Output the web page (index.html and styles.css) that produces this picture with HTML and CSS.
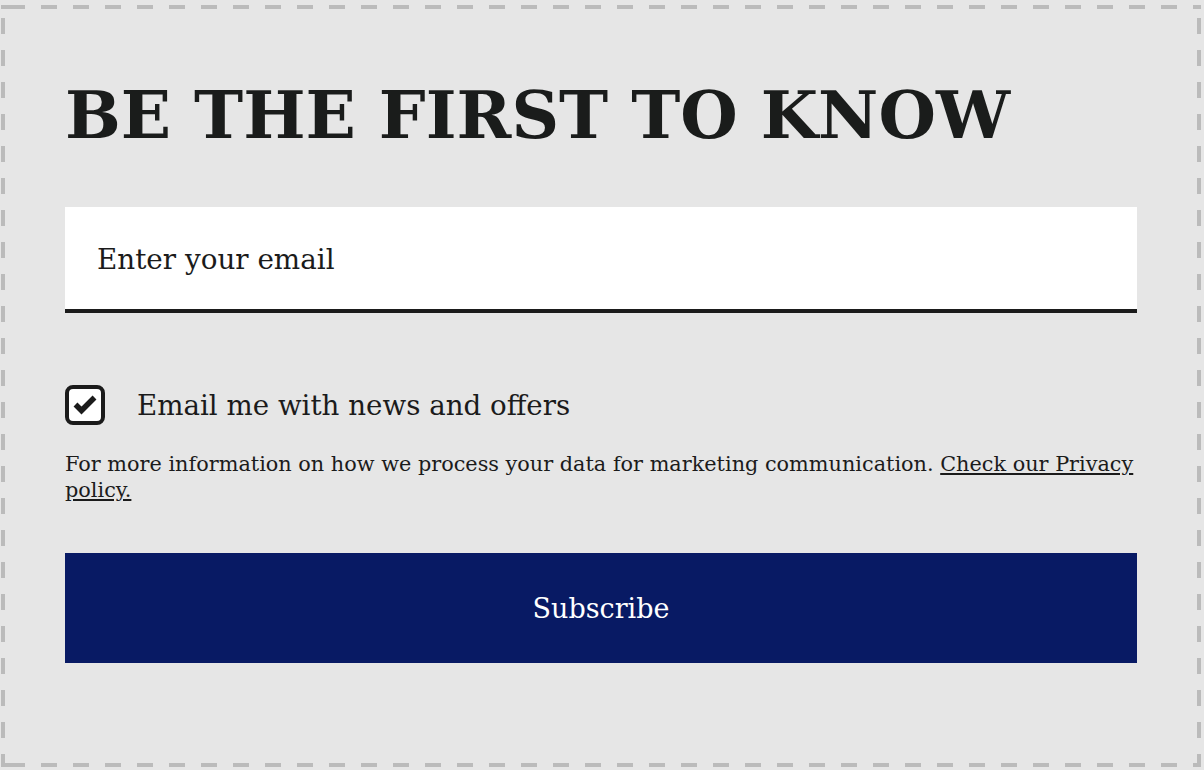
FILE: index.html
```html
<!DOCTYPE html>
<html>
<head>
  <meta charset="utf-8">
  <link rel="stylesheet" href="styles.css">
</head>
<body>
	<div class="signup">
		<h1 class="signup-title">BE THE FIRST TO KNOW</h1>
		<form class="signup-form" onsubmit="return false">
			<input class="email-field" type="email" placeholder="Enter your email">
			<label class="consent">
				<input class="consent-input" type="checkbox" checked>
				<span class="consent-box">
					<svg width="40" height="40" viewBox="0 0 40 40">
						<rect x="2" y="2" width="36" height="36" rx="6" fill="#fff" stroke="#1b1b1b" stroke-width="4"/>
						<path d="M10.5 19.5 L16.5 25.5 L29.5 12.5" fill="none" stroke="#1b1b1b" stroke-width="5.5" stroke-linejoin="miter"/>
					</svg>
				</span>
				<span class="consent-text">Email me with news and offers</span>
			</label>
			<p class="privacy">For more information on how we process your data for marketing communication. <a href="#">Check our Privacy policy.</a></p>
			<button class="subscribe" type="submit">Subscribe</button>
		</form>
	</div>
</body>
</html>
```

FILE: styles.css
```css
/* ============================================================
  PAGE
============================================================ */
html, body {
  margin: 0;
  background-color: #e6e6e6;
}
body {
  font-family: "DejaVu Serif", Georgia, serif;
  color: #1b1b1b;
}

/* dashed frame, drawn with gradients so the dash rhythm is exact */
.signup {
  box-sizing: border-box;
  width: 1200px;
  margin: 5px 0 0 1px;
  padding: 77px 64px 104px;
  background-color: #e6e6e6;
  background-image:
    repeating-linear-gradient(90deg, #bbbbbb 0 16px, transparent 16px 32px),
    repeating-linear-gradient(90deg, #bbbbbb 0 16px, transparent 16px 32px),
    repeating-linear-gradient(180deg, #bbbbbb 0 16px, transparent 16px 32px),
    repeating-linear-gradient(180deg, #bbbbbb 0 16px, transparent 16px 32px);
  background-size: 100% 4px, 100% 4px, 4px 100%, 4px 100%;
  background-position: 8px 0, 8px 100%, 0 13px, 100% 13px;
  background-repeat: repeat-x, repeat-x, repeat-y, repeat-y;
}

/* ============================================================
  TITLE
============================================================ */
.signup-title {
  margin: 0 0 59px;
  font-size: 66px;
  line-height: 66px;
  font-weight: bold;
  color: #1a1c1b;
}

/* ============================================================
  FORM
============================================================ */
.signup-form {
  display: flex;
  flex-direction: column;
}
.email-field {
  box-sizing: border-box;
  height: 106px;
  margin: 0;
  padding: 2px 32px 0;
  border: none;
  border-bottom: 4px solid #1b1b1b;
  border-radius: 0;
  background-color: #fff;
  font-family: inherit;
  font-size: 27.8px;
  color: #1b1b1b;
  outline: none;
}
.email-field::placeholder {
  color: #1b1b1b;
  opacity: 1;
}

.consent {
  display: flex;
  align-items: center;
  gap: 32px;
  margin-top: 72px;
  height: 40px;
  cursor: pointer;
  font-size: 27.7px;
}
.consent-input {
  position: absolute;
  margin-left: -9999px;
  visibility: hidden;
}
.consent-box {
  display: block;
  width: 40px;
  height: 40px;
}
.consent-box svg {
  display: block;
}
.consent-input:not(:checked) + .consent-box path {
  display: none;
}

.privacy {
  margin: 26px 0 0;
  font-size: 20.8px;
  line-height: 26px;
}
.privacy a {
  color: inherit;
  text-decoration: underline;
  text-underline-offset: 2px;
}

.subscribe {
  height: 110px;
  margin-top: 50px;
  border: none;
  border-radius: 0;
  background-color: #081a64;
  color: #fff;
  font-family: inherit;
  font-size: 27px;
  cursor: pointer;
}
```
